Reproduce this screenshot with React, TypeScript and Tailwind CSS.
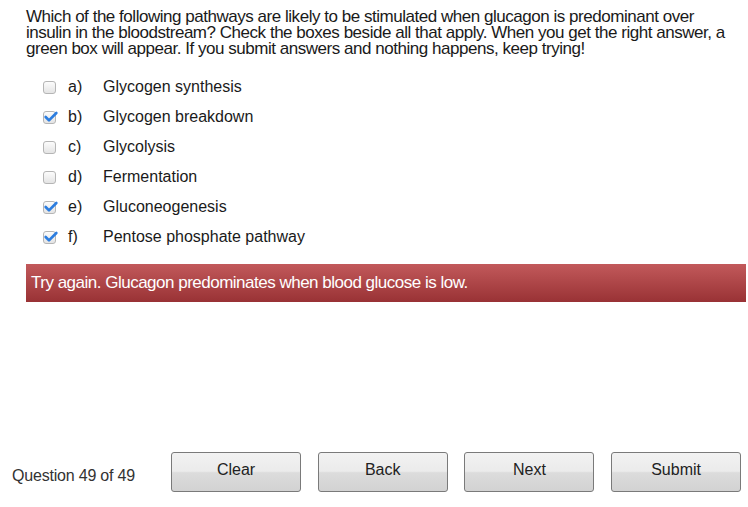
import { Check } from "lucide-react";

const options = [
  { key: "a", label: "Glycogen synthesis", checked: false },
  { key: "b", label: "Glycogen breakdown", checked: true },
  { key: "c", label: "Glycolysis", checked: false },
  { key: "d", label: "Fermentation", checked: false },
  { key: "e", label: "Gluconeogenesis", checked: true },
  { key: "f", label: "Pentose phosphate pathway", checked: true },
];

const buttons = ["Clear", "Back", "Next", "Submit"];

function Box({ checked }: { checked: boolean }) {
  return (
    <span className="relative w-[13px] h-[13px] rounded-[3px] border border-[#b5b5b5] bg-gradient-to-b from-[#fcfcfc] to-[#e4e4e4] shrink-0">
      {checked && (
        <Check
          className="absolute -left-[1px] -top-[3px] w-[16px] h-[16px] text-[#2b7de0]"
          strokeWidth={4}
        />
      )}
    </span>
  );
}

export default function App() {
  return (
    <div className="w-[748px] h-[507px] bg-white font-['Liberation_Sans',Arial,sans-serif] text-[#1a1a1a] flex flex-col">
      <p className="pl-[26px] pr-[20px] pt-[9px] text-[17px] leading-[16px] tracking-[-0.47px]">
        Which of the following pathways are likely to be stimulated when glucagon is predominant over
        insulin in the bloodstream? Check the boxes beside all that apply. When you get the right answer, a
        green box will appear. If you submit answers and nothing happens, keep trying!
      </p>

      <ul className="mt-[15px] pl-[43px] flex flex-col">
        {options.map(o => (
          <li key={o.key} className="h-[30px] flex items-center text-[16px]">
            <Box checked={o.checked} />
            <span className="ml-[12px] w-[35px]">{o.key})</span>
            <span>{o.label}</span>
          </li>
        ))}
      </ul>

      <div className="mt-[12px] ml-[26px] mr-[2px] h-[38px] flex items-center pl-[5px] bg-gradient-to-b from-[#c2595b] to-[#993235] text-white text-[17px] tracking-[-0.5px]">
        Try again. Glucagon predominates when blood glucose is low.
      </div>

      <div className="mt-auto mb-[15px] flex items-center">
        <span className="pl-[12px] w-[171px] text-[16px] tracking-[-0.2px] pt-[8px] text-[#333]">
          Question 49 of 49
        </span>
        <div className="flex gap-[16.7px]">
          {buttons.map(b => (
            <button
              key={b}
              className="w-[130px] h-[40px] rounded-[3px] border border-[#7a7a7a] bg-[linear-gradient(#f2f2f2_0%,#ebebeb_48%,#dcdcdc_52%,#d2d2d2_100%)] text-[16px] text-[#222] pb-[4px]"
            >
              {b}
            </button>
          ))}
        </div>
      </div>
    </div>
  );
}
